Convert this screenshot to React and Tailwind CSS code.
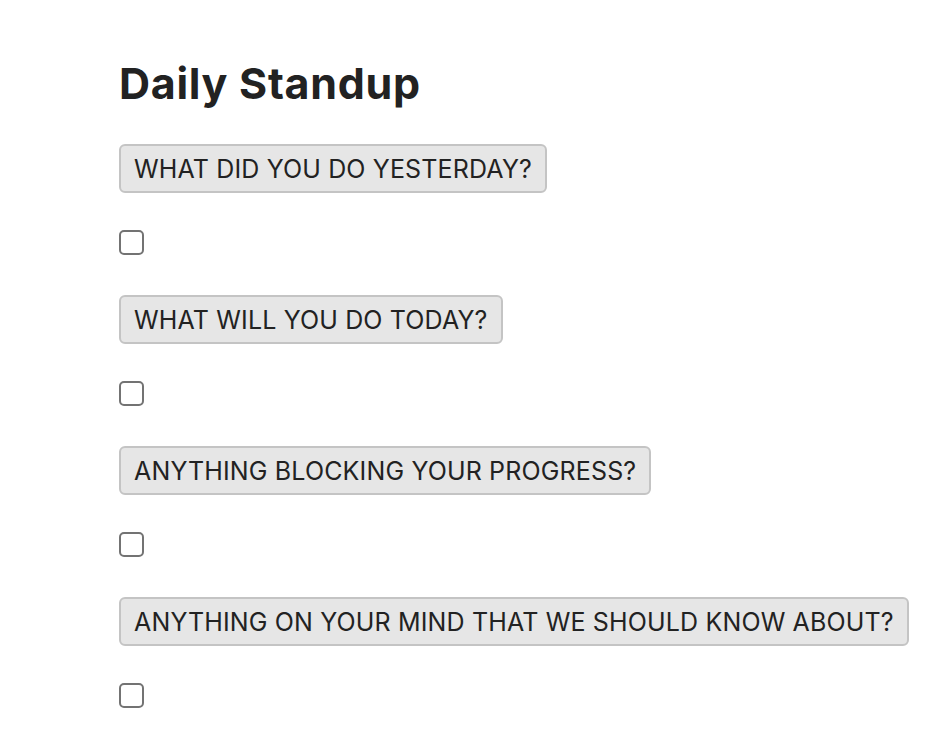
export default function App() {
  const questions = [
    'WHAT DID YOU DO YESTERDAY?',
    'WHAT WILL YOU DO TODAY?',
    'ANYTHING BLOCKING YOUR PROGRESS?',
    'ANYTHING ON YOUR MIND THAT WE SHOULD KNOW ABOUT?',
  ]

  return (
    <div className="min-h-screen bg-white pl-[119px] pt-[57px] text-[#222]" style={{ fontFamily: 'Inter, "Noto Sans", sans-serif' }}>
      <h1 className="text-[43px] font-bold leading-[52px] tracking-[0.7px]">Daily Standup</h1>
      <div className="mt-[35px] flex flex-col items-start">
        {questions.map((q, i) => (
          <div key={i} className="flex flex-col items-start">
            <button className="h-[49px] rounded-[6px] border-2 border-[#c4c4c4] bg-[#e6e6e6] px-[13px] pt-[2px] text-[25px] leading-none tracking-[0.15px] text-[#222]">
              {q}
            </button>
            <div className="mt-[37px] mb-[40px] h-[25px] w-[25px] rounded-[5px] border-2 border-[#737373] bg-white" />
          </div>
        ))}
      </div>
    </div>
  )
}
